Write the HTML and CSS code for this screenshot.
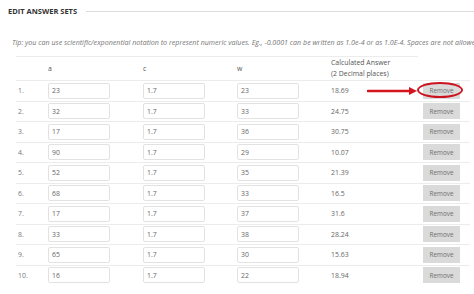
FILE: index.html
```html
<!DOCTYPE html>
<html>
<head>
<meta charset="utf-8">
<link rel="stylesheet" href="styles.css">
</head>
<body>
<div class="page">
  <div class="heading">
    <span class="heading-text">EDIT ANSWER SETS</span>
    <span class="heading-line"></span>
  </div>
  <p class="tip">Tip: you can use scientific/exponential notation to represent numeric values. Eg., -0.0001 can be written as 1.0e-4 or as 1.0E-4. Spaces are not allowed.</p>
  <div class="table">
    <div class="row head">
      <div class="cell num"></div>
      <div class="cell">a</div>
      <div class="cell">c</div>
      <div class="cell">w</div>
      <div class="cell answer-head">Calculated Answer<br>(2 Decimal places)</div>
      <div class="cell blank"></div>
    </div>
    <div class="row first">
      <div class="cell num">1.</div>
      <div class="cell"><span class="input">23</span></div>
      <div class="cell"><span class="input">1.7</span></div>
      <div class="cell"><span class="input">23</span></div>
      <div class="cell ans">18.69</div>
      <div class="cell rm">
        <span class="btn">Remove</span>
        <span class="ring"></span>
        <svg class="arrow" width="52" height="10" viewBox="0 0 52 10"><line x1="1" y1="5" x2="44" y2="5" stroke="#d4141f" stroke-width="2.6" stroke-linecap="round"/><polygon points="42,1 50,5 42,9" fill="#d4141f"/></svg>
      </div>
    </div>
    <div class="row"><div class="cell num">2.</div><div class="cell"><span class="input">32</span></div><div class="cell"><span class="input">1.7</span></div><div class="cell"><span class="input">33</span></div><div class="cell ans">24.75</div><div class="cell rm"><span class="btn">Remove</span></div></div>
    <div class="row"><div class="cell num">3.</div><div class="cell"><span class="input">17</span></div><div class="cell"><span class="input">1.7</span></div><div class="cell"><span class="input">36</span></div><div class="cell ans">30.75</div><div class="cell rm"><span class="btn">Remove</span></div></div>
    <div class="row"><div class="cell num">4.</div><div class="cell"><span class="input">90</span></div><div class="cell"><span class="input">1.7</span></div><div class="cell"><span class="input">29</span></div><div class="cell ans">10.07</div><div class="cell rm"><span class="btn">Remove</span></div></div>
    <div class="row"><div class="cell num">5.</div><div class="cell"><span class="input">52</span></div><div class="cell"><span class="input">1.7</span></div><div class="cell"><span class="input">35</span></div><div class="cell ans">21.39</div><div class="cell rm"><span class="btn">Remove</span></div></div>
    <div class="row"><div class="cell num">6.</div><div class="cell"><span class="input">68</span></div><div class="cell"><span class="input">1.7</span></div><div class="cell"><span class="input">33</span></div><div class="cell ans">16.5</div><div class="cell rm"><span class="btn">Remove</span></div></div>
    <div class="row"><div class="cell num">7.</div><div class="cell"><span class="input">17</span></div><div class="cell"><span class="input">1.7</span></div><div class="cell"><span class="input">37</span></div><div class="cell ans">31.6</div><div class="cell rm"><span class="btn">Remove</span></div></div>
    <div class="row"><div class="cell num">8.</div><div class="cell"><span class="input">33</span></div><div class="cell"><span class="input">1.7</span></div><div class="cell"><span class="input">38</span></div><div class="cell ans">28.24</div><div class="cell rm"><span class="btn">Remove</span></div></div>
    <div class="row"><div class="cell num">9.</div><div class="cell"><span class="input">65</span></div><div class="cell"><span class="input">1.7</span></div><div class="cell"><span class="input">30</span></div><div class="cell ans">15.63</div><div class="cell rm"><span class="btn">Remove</span></div></div>
    <div class="row last"><div class="cell num">10.</div><div class="cell"><span class="input">16</span></div><div class="cell"><span class="input">1.7</span></div><div class="cell"><span class="input">22</span></div><div class="cell ans">18.94</div><div class="cell rm"><span class="btn">Remove</span></div></div>
  </div>
</div>
</body>
</html>
```
FILE: styles.css
```css
html, body {
  margin: 0;
  padding: 0;
  background: #ffffff;
}
body {
  width: 474px;
  height: 294px;
  overflow: hidden;
  font-family: "Open Sans", "Liberation Sans", sans-serif;
  color: #666666;
}
.page {
  padding-top: 6px;
}
.heading {
  display: flex;
  align-items: center;
  gap: 9px;
  height: 10px;
  padding-left: 8px;
}
.heading-text {
  font-weight: 700;
  font-size: 7.5px;
  color: #333333;
  white-space: nowrap;
}
.heading-line {
  flex: 1;
  height: 1px;
  background: #dddddd;
}
.tip {
  margin: 21px 0 0 12px;
  font-style: italic;
  font-size: 7.12px;
  line-height: 10px;
  color: #777777;
  white-space: nowrap;
  overflow: hidden;
}
.table {
  margin-top: 9px;
  margin-left: 16px;
  width: 454px;
}
.row {
  display: grid;
  grid-template-columns: 32px 95px 94px 94px 87px 52px;
  height: 20.5px;
  border-top: 1px solid #ececec;
  box-sizing: border-box;
  font-size: 6.9px;
}
.row.head {
  height: 24px;
  border-top: none;
}
.row.head .cell {
  border-top: 1px solid #ececec;
  color: #555555;
}
.row.head .cell.blank {
  border-top: none;
}
.cell {
  display: flex;
  align-items: center;
}
.num {
  padding-left: 2px;
  color: #777777;
}
.answer-head {
  line-height: 10.5px;
}
.input {
  box-sizing: border-box;
  width: 62px;
  height: 16px;
  border: 1px solid #e2e2e2;
  border-radius: 2px;
  padding-left: 3px;
  display: flex;
  align-items: center;
  color: #666666;
  background: #ffffff;
}
.ans {
  color: #666666;
}
.rm {
  position: relative;
  padding-left: 5px;
}
.btn {
  width: 37px;
  height: 16px;
  background: #dadada;
  color: #6f6f6f;
  font-size: 6.4px;
  display: flex;
  align-items: center;
  justify-content: center;
}
.ring {
  position: absolute;
  left: -1px;
  top: 1px;
  width: 46px;
  height: 16px;
  border: 2px solid #cc1420;
  border-radius: 50%;
  box-sizing: border-box;
}
.arrow {
  position: absolute;
  left: -51px;
  top: 5px;
}
```
